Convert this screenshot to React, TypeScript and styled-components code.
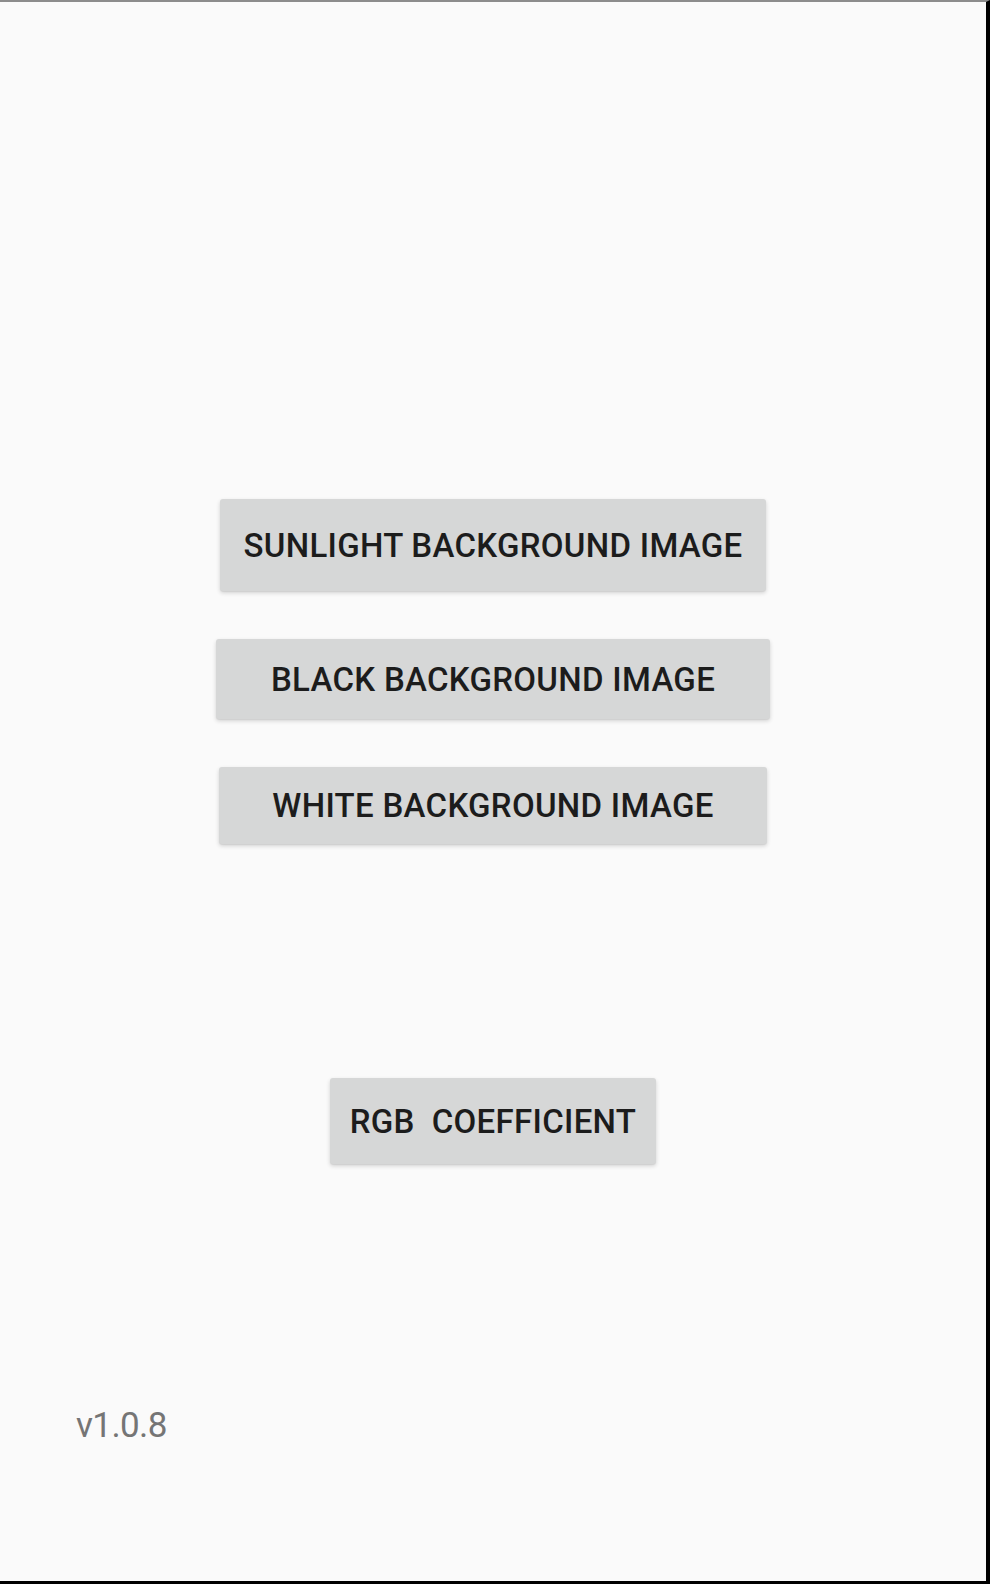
import styled, { createGlobalStyle } from 'styled-components';

const GlobalStyle = createGlobalStyle`
    html, body {
        margin: 0;
        padding: 0;
        background: #fafafa;
    }
`;

const Frame = styled.div`
    box-sizing: border-box;
    height: 1584px;
    width: 990px;
    background: #fafafa;
    border-top: 2px solid #8c8c8c;
    border-right: 4px solid #000;
    border-bottom: 3px solid #000;
    display: flex;
    flex-direction: column;
    font-family: Roboto, 'Noto Sans', sans-serif;
`;

const Actions = styled.div`
    display: flex;
    flex-direction: column;
    align-items: center;
    padding-top: 497px;
`;

const Button = styled.button<{ $width: number; $height: number; $gap: number }>`
    box-sizing: border-box;
    width: ${(p) => p.$width}px;
    height: ${(p) => p.$height}px;
    margin-top: ${(p) => p.$gap}px;
    border: none;
    border-radius: 3px;
    background: #d6d7d7;
    color: #1c1c1c;
    font-family: Roboto, sans-serif;
    font-weight: 500;
    font-size: 33px;
    letter-spacing: 0.3px;
    text-transform: uppercase;
    white-space: pre;
    padding: 0;
    box-shadow: 0 2px 4px rgba(0, 0, 0, 0.16), 0 1px 1px rgba(0, 0, 0, 0.06);
    cursor: pointer;
`;

const Version = styled.div`
    margin-top: 244px;
    padding-left: 76px;
    font-size: 35px;
    letter-spacing: -0.6px;
    line-height: 1;
    color: #757575;
`;

export default function App() {
    return (
        <>
            <GlobalStyle />
            <Frame>
                <Actions>
                    <Button $width={546} $height={92} $gap={0}>SUNLIGHT BACKGROUND IMAGE</Button>
                    <Button $width={554} $height={80} $gap={48}>BLACK BACKGROUND IMAGE</Button>
                    <Button $width={548} $height={77} $gap={48}>WHITE BACKGROUND IMAGE</Button>
                    <Button $width={326} $height={86} $gap={234}>{'RGB  COEFFICIENT'}</Button>
                </Actions>
                <Version>v1.0.8</Version>
            </Frame>
        </>
    );
}
